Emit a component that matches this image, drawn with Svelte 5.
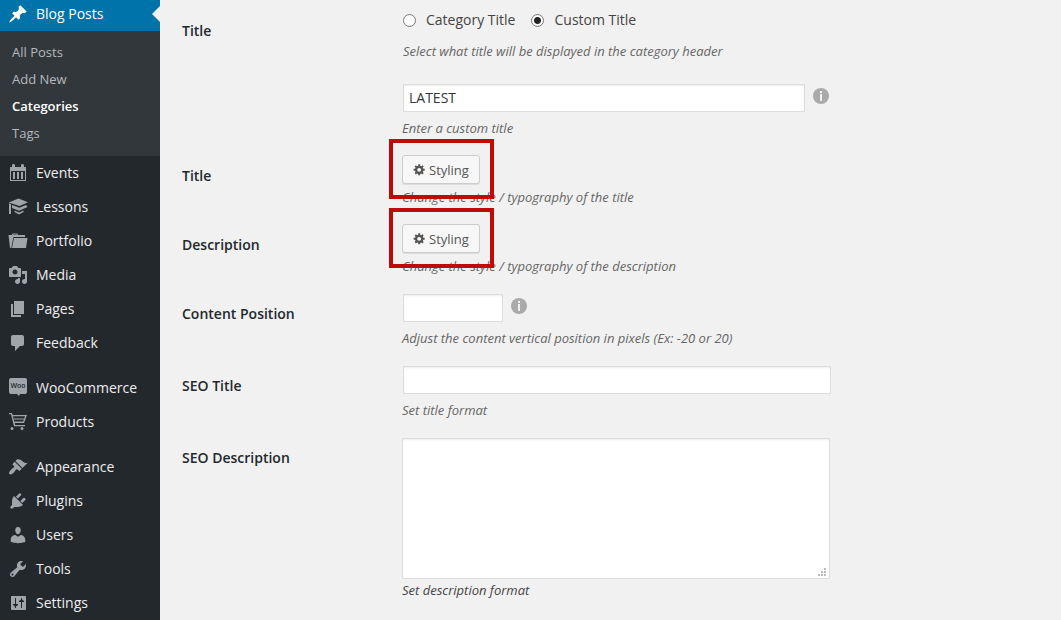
<script lang="ts">
	type MenuItem = { name: string; icon: string };

	const submenu = ['All Posts', 'Add New', 'Categories', 'Tags'];

	const groups: MenuItem[][] = [
		[
			{ name: 'Events', icon: 'calendar' },
			{ name: 'Lessons', icon: 'learn' },
			{ name: 'Portfolio', icon: 'portfolio' },
			{ name: 'Media', icon: 'media' },
			{ name: 'Pages', icon: 'page' },
			{ name: 'Feedback', icon: 'comments' }
		],
		[
			{ name: 'WooCommerce', icon: 'woo' },
			{ name: 'Products', icon: 'cart' }
		],
		[
			{ name: 'Appearance', icon: 'appearance' },
			{ name: 'Plugins', icon: 'plugins' },
			{ name: 'Users', icon: 'users' },
			{ name: 'Tools', icon: 'tools' },
			{ name: 'Settings', icon: 'settings' }
		]
	];

	const icons: Record<string, string> = {
		post: 'M10.44 3.02l1.82-1.82 6.36 6.35-1.83 1.82c-1.05-.68-2.48-.57-3.41.36l-.75.75c-.92.93-1.04 2.35-.35 3.41l-1.83 1.82-2.41-2.41-2.8 2.79c-.42.42-3.38 2.71-3.8 2.29s1.86-3.39 2.28-3.81l2.79-2.79L4.1 9.36l1.83-1.82c1.05.69 2.48.57 3.4-.36l.75-.75c.93-.92 1.05-2.35.36-3.41z',
		calendar:
			'M2 4h2V2.5C4 1.7 4.5 1 5.5 1S7 1.7 7 2.5V4h6V2.5C13 1.7 13.5 1 14.5 1S16 1.7 16 2.5V4h2v14H2zm1 4v9h14V8zM5 9h2v7H5zm4 0h2v7H9zm4 0h2v7h-2z',
		learn: 'M10.5 1.5L20 5.3 11.500 9 .7 5.500zM1 6.200l2 .7V17H1zM4 8l7.500 2.800L18 8l1.500 2-8.500 3.800L4 11zM6.500 13.500l4.500 2 4.500-2V15L11 17.500 6.500 15z',
		portfolio:
			'M4 4c0-1 .6-1.5 1.5-1.5h3c.8 0 1.5.5 1.5 1.5h7v2H5.5L3.3 17H2L.5 4zm1.2 0h3.6v-.6H5.2zM6 7h13.5L18 17H4z',
		media: 'M13 11V4c0-.55-.45-1-1-1h-1.67L9 1H5L3.67 3H2c-.55 0-1 .45-1 1v7c0 .55.45 1 1 1h10c.55 0 1-.45 1-1zM7 4.5c1.38 0 2.5 1.12 2.5 2.5S8.38 9.5 7 9.5 4.5 8.38 4.5 7 5.62 4.5 7 4.5zM14 6h5v10.5c0 1.38-1.12 2.5-2.5 2.5S14 17.88 14 16.5s1.12-2.5 2.5-2.5c.17 0 .34.02.5.05V9h-3V6zm-4 8.05V13h2v3.5c0 1.38-1.12 2.5-2.5 2.5S7 17.88 7 16.5 8.12 14 9.5 14c.17 0 .34.02.5.05z',
		page: 'M6 15V2h10v13H6zm-1 1h8v2H3V5h2v11z',
		comments:
			'M5 2h9c1.1 0 2 .9 2 2v7c0 1.1-.9 2-2 2h-2l-5 5v-5H5c-1.1 0-2-.9-2-2V4c0-1.1.9-2 2-2z',
		cart: 'M1 1h3l.5 2H19l-3 8H6.700l.5 2H17v1.300H6L3 2.300H1zM5 4.300l1.200 5.300h9L17 4.300zM6 6.500h10v1H6zM4 15a1.500 1.500 0 1 1 0 3 1.500 1.500 0 0 1 0-3zM14 15a1.500 1.500 0 1 1 0 3 1.500 1.500 0 0 1 0-3z',
		appearance:
			'M14.48 11.06L7.41 3.99l1.5-1.5c.5-.56 2.3-.47 3.51.32 1.21.8 1.43 1.28 2.91 2.1 1.18.64 2.45 1.26 4.45.85zm-.71.71L6.7 4.7 4.93 6.47c-.39.39-.39 1.02 0 1.41l1.06 1.06c.39.39.39 1.03 0 1.42-.6.6-1.43 1.11-2.21 1.69-.35.26-.7.53-1.01.84C1.43 14.23.4 16.08 1.4 17.07c.99 1 2.84-.03 4.18-1.36.31-.31.58-.66.85-1.02.57-.78 1.08-1.61 1.69-2.21.39-.39 1.02-.39 1.41 0l1.06 1.06c.39.39 1.02.39 1.41 0z',
		plugins:
			'M13.11 4.36L9.87 7.6 8 5.73l3.24-3.24c.35-.34 1.05-.2 1.56.32.52.51.66 1.21.31 1.55zm-8 1.77l.91-1.12 9.01 9.01-1.19.84c-.71.71-2.63 1.16-3.82 1.16H6.14L4.9 17.26c-.59.59-1.54.59-2.12 0-.59-.58-.59-1.53 0-2.12l1.24-1.24v-3.88c0-1.13.4-3.19 1.09-3.89zm7.26 3.97l3.24-3.24c.34-.35 1.04-.21 1.55.31.52.51.66 1.21.31 1.55l-3.24 3.25z',
		users: 'M10 9.25c-2.27 0-2.73-3.44-2.73-3.44C7 4.02 7.82 2 9.97 2c2.16 0 2.98 2.02 2.71 3.81 0 0-.41 3.44-2.68 3.44zm0 2.57L12.72 10c2.39 0 4.52 2.33 4.52 4.53v2.49s-3.65 1.13-7.24 1.13c-3.65 0-7.24-1.13-7.24-1.13v-2.49c0-2.25 1.94-4.48 4.47-4.48z',
		tools: 'M16.68 9.77c-1.34 1.34-3.3 1.67-4.95.99l-5.41 6.52c-.99.99-2.59.99-3.58 0s-.99-2.59 0-3.57l6.52-5.42c-.68-1.65-.35-3.61.99-4.95 1.28-1.28 3.12-1.62 4.72-1.06l-2.89 2.89 2.82 2.82 2.86-2.87c.53 1.58.18 3.39-1.08 4.65zM3.81 16.21c.4.39 1.04.39 1.43 0 .4-.4.4-1.04 0-1.43-.39-.4-1.03-.4-1.43 0-.39.39-.39 1.03 0 1.43z',
		settings:
			'M4 3h13c.6 0 1 .4 1 1v12c0 .6-.4 1-1 1H4c-.6 0-1-.4-1-1V4c0-.6.4-1 1-1zm3 2v6H5v1l2 1.5V15h1v-1.5l2-1.5v-1H8V5zm6 0v1.500L11 8v1h2v6h1V9h2V8l-2-1.500V5z',
		gear: 'M18 12h-2.18c-.17.7-.44 1.35-.81 1.93l1.54 1.54-2.1 2.1-1.54-1.54c-.58.36-1.23.63-1.91.79V19H8v-2.18c-.68-.16-1.33-.43-1.91-.79l-1.54 1.54-2.12-2.12 1.54-1.54c-.36-.58-.63-1.23-.79-1.91H1V9.03h2.17c.16-.7.44-1.35.8-1.94L2.43 5.55l2.1-2.1 1.54 1.54c.58-.37 1.24-.64 1.93-.81V2h3v2.18c.68.16 1.33.43 1.91.79l1.54-1.54 2.12 2.12-1.54 1.54c.36.59.64 1.24.8 1.94H18V12zm-8.5 1.5c1.66 0 3-1.34 3-3s-1.34-3-3-3-3 1.34-3 3 1.34 3 3 3z'
	};

	let titleType = $state('custom');
	let customTitle = $state('LATEST');
	let position = $state('');
	let seoTitle = $state('');
	let seoDescription = $state('');
</script>

{#snippet icon(name: string)}
	<svg class="icon" viewBox="0 0 20 20" aria-hidden="true">
		{#if name === 'woo'}
			<path d="M3 0h14a2 2 0 0 1 2 2v12a2 2 0 0 1-2 2h-5l-1 2-2-2H3a2 2 0 0 1-2-2V2a2 2 0 0 1 2-2z" />
			<text class="woo" x="10" y="10" text-anchor="middle">Woo</text>
		{:else}
			<path fill-rule="evenodd" d={icons[name]} />
		{/if}
	</svg>
{/snippet}

{#snippet info()}
	<svg class="info" viewBox="0 0 16 16" role="img" aria-label="Info">
		<circle cx="8" cy="8" r="8" />
		<path d="M7 3h2v2H7zM7 6h2v7H7z" />
	</svg>
{/snippet}

<div class="admin">
	<nav class="sidebar">
		<a class="item current" href="#posts">{@render icon('post')}Blog Posts</a>
		<ul class="submenu">
			{#each submenu as name}
				<li><a class:active={name === 'Categories'} href="#posts">{name}</a></li>
			{/each}
		</ul>
		{#each groups as group}
			<ul class="group">
				{#each group as item}
					<li><a class="item" href="#{item.icon}">{@render icon(item.icon)}{item.name}</a></li>
				{/each}
			</ul>
		{/each}
	</nav>

	<form class="settings">
		<div class="row">
			<label class="name" for="custom-title">Title</label>
			<div class="field">
				<div class="radios">
					<label>
						<input type="radio" name="title-type" value="category" bind:group={titleType} />
						Category Title
					</label>
					<label>
						<input type="radio" name="title-type" value="custom" bind:group={titleType} />
						Custom Title
					</label>
				</div>
				<p class="description choice">Select what title will be displayed in the category header</p>
				<div class="control first">
					<input class="text medium" id="custom-title" type="text" bind:value={customTitle} />
					{@render info()}
				</div>
				<p class="description">Enter a custom title</p>
			</div>
		</div>

		{#each ['Title', 'Description'] as name}
			<div class="row">
				<span class="name">{name}</span>
				<div class="field">
					<div class="highlight">
						<button type="button">{@render icon('gear')}Styling</button>
					</div>
					<p class="description tight">Change the style / typography of the {name.toLowerCase()}</p>
				</div>
			</div>
		{/each}

		<div class="row">
			<label class="name" for="position">Content Position</label>
			<div class="field">
				<div class="control">
					<input class="text small" id="position" type="text" bind:value={position} />
					{@render info()}
				</div>
				<p class="description">Adjust the content vertical position in pixels (Ex: -20 or 20)</p>
			</div>
		</div>

		<div class="row">
			<label class="name" for="seo-title">SEO Title</label>
			<div class="field">
				<div class="control">
					<input class="text" id="seo-title" type="text" bind:value={seoTitle} />
				</div>
				<p class="description">Set title format</p>
			</div>
		</div>

		<div class="row">
			<label class="name" for="seo-description">SEO Description</label>
			<div class="field">
				<div class="area">
					<textarea id="seo-description" bind:value={seoDescription}></textarea>
					<svg class="grip" viewBox="0 0 8 8" aria-hidden="true">
						<path d="M6 0h2v2H6zM3 3h2v2H3zM6 3h2v2H6zM0 6h2v2H0zM3 6h2v2H3zM6 6h2v2H6z" />
					</svg>
				</div>
				<p class="description dark">Set description format</p>
			</div>
		</div>
	</form>
</div>

<style>
	:global(body) {
		background: #f1f1f1;
		color: #444;
		font-family: 'Open Sans', sans-serif;
		font-size: 14px;
		line-height: 20px;
	}

	.admin {
		display: grid;
		grid-template-columns: 160px 1fr;
		min-height: 100vh;
	}

	.sidebar {
		background: #23282d;
	}

	ul {
		list-style: none;
		margin: 0;
		padding: 0;
	}

	.item {
		display: flex;
		align-items: center;
		gap: 8px;
		height: 34px;
		padding-left: 8px;
		color: #eee;
		text-decoration: none;
	}

	.icon {
		flex: none;
		width: 20px;
		height: 20px;
		fill: #a0a5aa;
	}

	.woo {
		fill: #23282d;
		font-size: 7px;
		font-weight: 600;
	}

	.current {
		position: relative;
		height: 28px;
		padding-bottom: 3px;
		background: #0073aa;
		color: #fff;
	}

	.current .icon {
		fill: #fff;
	}

	.current::after {
		content: '';
		position: absolute;
		top: 6px;
		right: 0;
		border: 8px solid transparent;
		border-left: none;
		border-right-color: #f1f1f1;
	}

	.submenu {
		padding: 8px 0 9px;
		background: #32373c;
		font-size: 13px;
	}

	.submenu a {
		display: block;
		padding-left: 12px;
		color: #b4b9be;
		line-height: 27px;
		text-decoration: none;
	}

	.submenu .active {
		color: #fff;
		font-weight: 600;
	}

	.group + .group {
		margin-top: 11px;
	}

	.settings {
		display: flex;
		flex-direction: column;
		gap: 17px;
		padding: 10px 22px;
	}

	.row {
		display: grid;
		grid-template-columns: 220px 1fr;
	}

	.name {
		padding-top: 11px;
		color: #23282d;
		font-weight: 600;
	}

	.radios {
		display: flex;
		gap: 16px;
		padding-left: 1px;
	}

	.radios label {
		display: flex;
		align-items: center;
		gap: 10px;
	}

	input[type='radio'] {
		appearance: none;
		width: 13px;
		height: 13px;
		margin: 0;
		border: 1px solid #777;
		border-radius: 50%;
		background: #fff;
	}

	input[type='radio']:checked {
		background: radial-gradient(circle, #222 3px, #fff 4px);
	}

	.control {
		display: flex;
		gap: 8px;
		padding: 1px;
	}

	.first {
		margin-top: 22px;
	}

	.text,
	textarea {
		box-sizing: border-box;
		width: 100%;
		max-width: 428px;
		border: 1px solid #ddd;
		background: #fff;
		box-shadow: inset 0 1px 2px rgba(0, 0, 0, 0.07);
		color: #32373c;
		font: inherit;
	}

	.text {
		height: 28px;
		padding: 2px 5px 4px;
	}

	.medium {
		max-width: 402px;
	}

	.small {
		max-width: 100px;
	}

	.info {
		flex: none;
		width: 16px;
		height: 16px;
		margin-top: 4px;
		fill: #aaa;
	}

	.info path {
		fill: #f1f1f1;
	}

	.description {
		margin: 5px 0 0;
		color: #666;
		font-size: 13px;
		font-style: italic;
	}

	.choice {
		margin-top: 11px;
		padding-left: 1px;
	}

	.tight {
		margin-top: 3px;
	}

	.dark {
		margin-top: 1px;
		color: #444;
	}

	.highlight {
		position: relative;
		width: fit-content;
	}

	.highlight::after {
		content: '';
		position: absolute;
		z-index: 1;
		inset: -16px -14px -15px -13px;
		border: 4px solid #c00a0a;
		pointer-events: none;
	}

	button {
		display: flex;
		align-items: center;
		gap: 3px;
		height: 29px;
		padding: 0 10px;
		border: 1px solid #ccc;
		border-radius: 3px;
		background: #f7f7f7;
		box-shadow: 0 1px 0 #ddd;
		color: #555;
		font: inherit;
		font-size: 13px;
	}

	button .icon {
		width: 13px;
		height: 13px;
		fill: #555;
	}

	.area {
		position: relative;
		max-width: 428px;
		padding-top: 1px;
	}

	textarea {
		display: block;
		height: 141px;
		padding: 5px;
		resize: none;
	}

	.grip {
		position: absolute;
		right: 4px;
		bottom: 3px;
		width: 8px;
		height: 8px;
		fill: #bbb;
	}
</style>
